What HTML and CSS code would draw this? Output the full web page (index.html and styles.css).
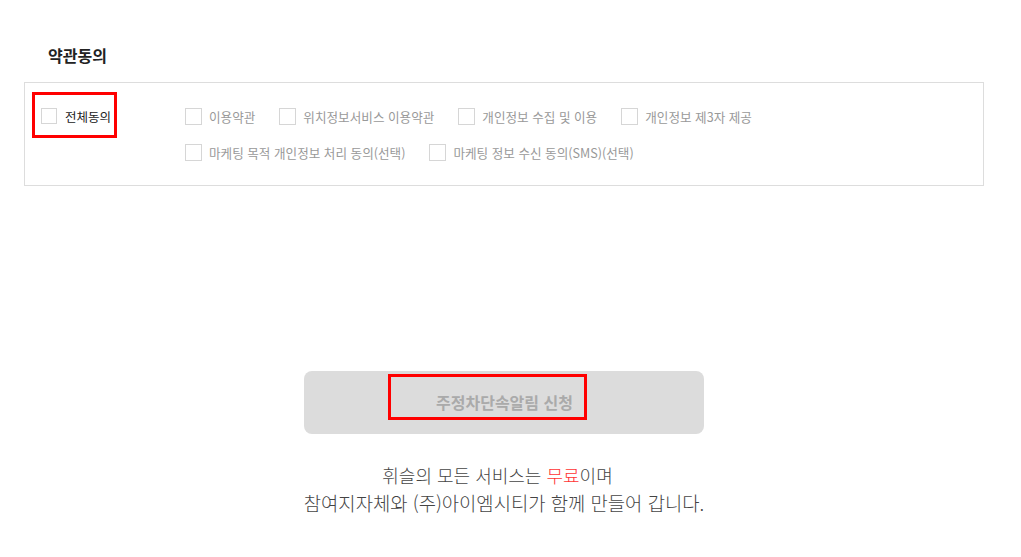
FILE: index.html
```html
<!DOCTYPE html>
<html lang="ko">
<head>
<meta charset="utf-8">
<title>약관동의</title>
<link rel="stylesheet" href="styles.css">
</head>
<body>
<div class="page">
  <section class="terms">
    <h2 class="terms-title">약관동의</h2>
    <div class="terms-box">
      <div class="all-agree">
        <label class="check check-all"><span class="box"></span><span class="txt">전체동의</span></label>
      </div>
      <div class="items">
        <div class="row">
          <label class="check"><span class="box"></span><span class="txt">이용약관</span></label>
          <label class="check"><span class="box"></span><span class="txt">위치정보서비스 이용약관</span></label>
          <label class="check"><span class="box"></span><span class="txt">개인정보 수집 및 이용</span></label>
          <label class="check"><span class="box"></span><span class="txt">개인정보 제3자 제공</span></label>
        </div>
        <div class="row">
          <label class="check"><span class="box"></span><span class="txt">마케팅 목적 개인정보 처리 동의(선택)</span></label>
          <label class="check"><span class="box"></span><span class="txt">마케팅 정보 수신 동의(SMS)(선택)</span></label>
        </div>
      </div>
    </div>
  </section>
  <div class="submit-wrap">
    <button class="submit" type="button"><span class="submit-label">주정차단속알림 신청</span></button>
  </div>
  <p class="notice"><span class="line line-first">휘슬의 모든 서비스는 <em class="free">무료</em>이며</span><span class="line line-second">참여지자체와 (주)아이엠시티가 함께 만들어 갑니다.</span></p>
</div>
</body>
</html>
```
FILE: styles.css
```css
* { box-sizing: border-box; }
html, body { margin: 0; padding: 0; background: #fff; }
body {
  font-family: "Noto Sans CJK KR", "Noto Sans", sans-serif;
  color: #222;
}
.page {
  width: 1008px;
  padding: 0 24px;
}
.terms-title {
  margin: 0;
  padding: 44px 0 0 24px;
  font-size: 16px;
  font-weight: 700;
  line-height: 22px;
  color: #222;
}
.terms-box {
  margin-top: 16px;
  border: 1px solid #ddd;
  display: grid;
  grid-template-columns: 153px 1fr;
  padding: 9px 0 23px 7px;
  min-height: 104px;
}
.all-agree { display: flex; align-items: flex-start; }
.check {
  display: inline-flex;
  align-items: center;
  font-size: 12.6px;
  line-height: 17px;
  color: #999;
  white-space: nowrap;
}
.check-all {
  display: flex;
  align-items: flex-start;
  border: 3px solid #f00;
  width: 85px;
  height: 46px;
  padding: 13px 0 0 6px;
  color: #222;
  font-size: 12.5px;
}
.box {
  width: 17px;
  height: 17px;
  border: 1px solid #d6d6d6;
  background: #fff;
  margin-right: 7px;
  flex: none;
}
.check-all .box { width: 16px; height: 16px; margin-right: 8px; }
.items { padding-top: 16px; }
.row { display: flex; gap: 24px; }
.row + .row { margin-top: 19px; }
.submit-wrap {
  display: flex;
  justify-content: center;
  margin-top: 185px;
}
.submit {
  width: 400px;
  height: 63px;
  border: none;
  border-radius: 8px;
  background: #dcdcdc;
  padding: 3px 0 0 84px;
  display: flex;
  align-items: flex-start;
  font-family: inherit;
  cursor: default;
}
.submit-label {
  display: flex;
  align-items: flex-end;
  width: 199px;
  height: 46px;
  border: 3px solid #f00;
  padding: 0 0 4px 45px;
  font-size: 16px;
  font-weight: 700;
  line-height: 22px;
  color: #aaa;
  white-space: nowrap;
}
.notice {
  margin: 27px 0 0;
  display: flex;
  flex-direction: column;
  align-items: center;
  font-size: 18px;
  font-weight: 300;
  line-height: 28px;
  color: #444;
}
.line { display: block; white-space: nowrap; }
.line-first { padding-right: 13px; }
.line-second { font-size: 18.8px; }
.free { font-style: normal; color: #f33; }
```
